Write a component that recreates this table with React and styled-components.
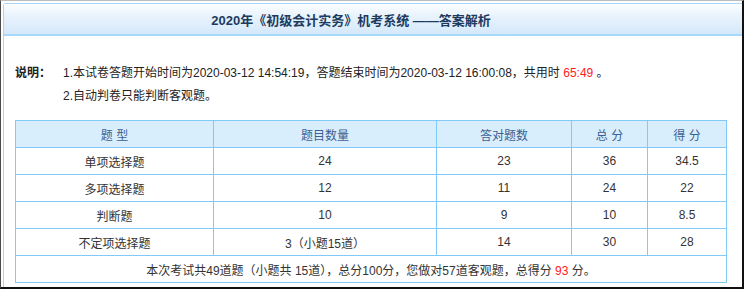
import styled, { createGlobalStyle } from 'styled-components';

const GlobalStyle = createGlobalStyle`
  html, body {
    margin: 0;
    padding: 0;
    background: #fff;
  }
  body {
    font-family: "Liberation Sans", Arial, "Noto Sans CJK SC", sans-serif;
    font-size: 12px;
    color: #333;
  }
`;

const Frame = styled.div`
  width: 744px;
  height: 289px;
  box-sizing: border-box;
  border-top: 1px solid #bcbcbc;
  border-left: 1px solid #4a4a4a;
  border-right: 2px solid #111;
  border-bottom: 2px solid #111;
  padding: 2px 0 0 2px;
  overflow: hidden;
`;

const Panel = styled.div`
  height: 100%;
  box-sizing: border-box;
  border-left: 1px solid #a9d6f5;
  border-top: 1px solid #a9d6f5;
  border-top-left-radius: 3px;
`;

const Header = styled.div`
  height: 30px;
  display: flex;
  align-items: center;
  justify-content: center;
  padding-right: 44px;
  background: linear-gradient(to bottom, #fbfdff 0%, #e6f2fc 45%, #d5e9fa 100%);
  border-bottom: 2px solid #a6d9fa;
  font-size: 13px;
  font-weight: bold;
  color: #1d3b5e;
`;

const Body = styled.div`
  padding: 26px 0 0 11px;
`;

const Notes = styled.div`
  display: flex;
  line-height: 23px;
  color: #222;
`;

const NoteLabel = styled.div`
  width: 48px;
  font-weight: bold;
  flex-shrink: 0;
`;

const NoteList = styled.div`
  display: flex;
  flex-direction: column;
`;

const Red = styled.span`
  color: #ff1a1a;
`;

const Table = styled.table`
  margin-top: 12px;
  border-collapse: collapse;
  table-layout: fixed;
  width: 712px;
`;

const HeadCell = styled.th`
  height: 26px;
  padding: 0;
  border: 1px solid #80c9f8;
  background: #d9eefd;
  font-weight: normal;
  color: #3b5f92;
  text-align: center;
`;

const Cell = styled.td`
  height: 26px;
  padding: 0;
  border: 1px solid #80c9f8;
  text-align: center;
  color: #333;
`;

const rows = [
  ['单项选择题', '24', '23', '36', '34.5'],
  ['多项选择题', '12', '11', '24', '22'],
  ['判断题', '10', '9', '10', '8.5'],
  ['不定项选择题', '3（小题15道）', '14', '30', '28'],
];

const heads = ['题 型', '题目数量', '答对题数', '总 分', '得 分'];
const widths = [198, 223, 135, 76, 79];

export default function App() {
  return (
    <>
      <GlobalStyle />
      <Frame>
        <Panel>
          <Header>2020年《初级会计实务》机考系统 ——答案解析</Header>
          <Body>
            <Notes>
              <NoteLabel>说明：</NoteLabel>
              <NoteList>
                <div>
                  1.本试卷答题开始时间为2020-03-12 14:54:19，答题结束时间为2020-03-12 16:00:08，共用时 <Red>65:49</Red> 。
                </div>
                <div>2.自动判卷只能判断客观题。</div>
              </NoteList>
            </Notes>
            <Table>
              <colgroup>
                {widths.map((w, i) => (
                  <col key={i} style={{ width: w }} />
                ))}
              </colgroup>
              <thead>
                <tr>
                  {heads.map((h) => (
                    <HeadCell key={h}>{h}</HeadCell>
                  ))}
                </tr>
              </thead>
              <tbody>
                {rows.map((r) => (
                  <tr key={r[0]}>
                    {r.map((c, i) => (
                      <Cell key={i}>{c}</Cell>
                    ))}
                  </tr>
                ))}
                <tr>
                  <Cell colSpan={5}>
                    本次考试共49道题（小题共 15道），总分100分，您做对57道客观题，总得分 <Red>93</Red> 分。
                  </Cell>
                </tr>
              </tbody>
            </Table>
          </Body>
        </Panel>
      </Frame>
    </>
  );
}
